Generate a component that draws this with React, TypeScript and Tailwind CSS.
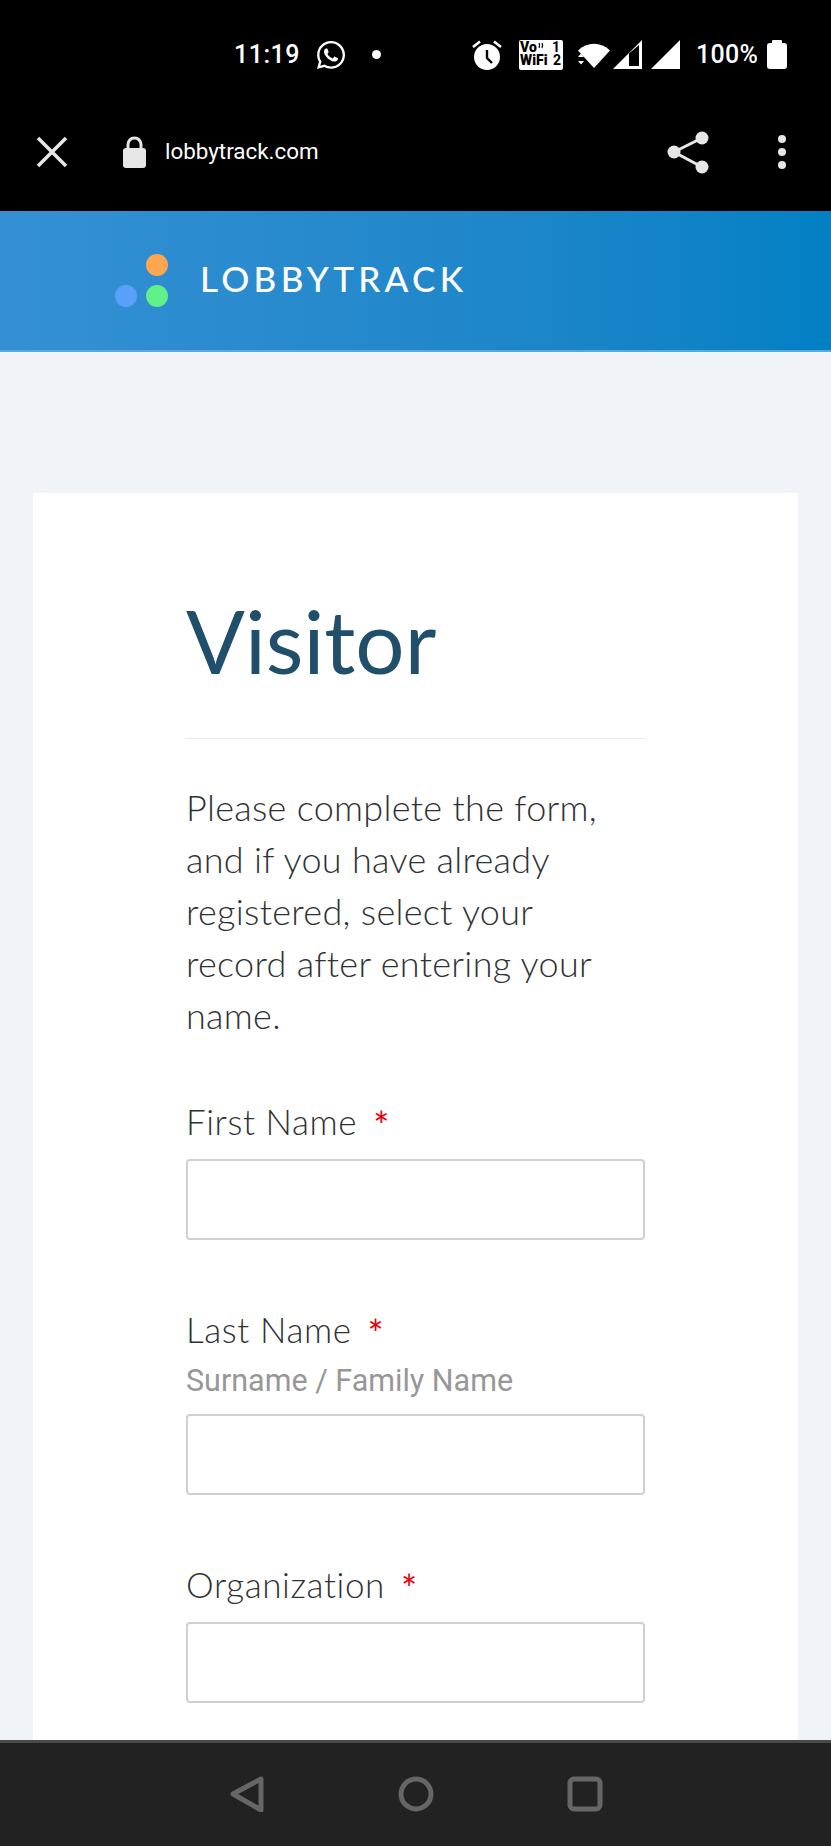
import React from 'react';
import { FaWhatsapp } from 'react-icons/fa';

const sans = 'font-["Lato",sans-serif]';
const roboto = 'font-["Roboto",sans-serif]';

function AlarmIcon() {
  return (
    <svg width="32" height="32" viewBox="0 0 32 32" fill="none">
      <circle cx="16" cy="18" r="13" fill="#fff" />
      <path d="M16 11v8l5 5" stroke="#000" strokeWidth="2.4" fill="none" />
      <path d="M2 8l7-5.500M30 8l-7-5.500" stroke="#fff" strokeWidth="2.600" />
    </svg>
  );
}

function VoWifiBadge() {
  return (
    <div className={`w-[44px] h-[30px] bg-white rounded-[2px] text-black ${roboto} font-black text-[14px] leading-[13px] px-[1px] pt-[1px] relative`}>
      <div className="flex justify-between">
        <span>Vo</span>
        <span className="font-bold pr-[2px]">1</span>
      </div>
      <div className="flex justify-between">
        <span>WiFi</span>
        <span className="font-bold pr-[1px]">2</span>
      </div>
      <svg className="absolute top-[2px] left-[19px]" width="8" height="7" viewBox="0 0 8 7" fill="none" stroke="#000" strokeWidth="1.300">
        <path d="M1 1c1 1.500 1 3 0 5M4 1c1 1.500 1 3 0 5" />
      </svg>
    </div>
  );
}

function WifiIcon() {
  return (
    <svg width="34" height="30" viewBox="0 0 34 30">
      <path d="M1 10.500C10 1.500 24 1.500 33 10.500L17 28z" fill="#fff" />
      <path d="M1 17l3-3.500 3 3.500zM1 21l3 3.500 3-3.500z" fill="#fff" />
    </svg>
  );
}

function SignalIcon({ hollow }: { hollow?: boolean }) {
  return (
    <svg width="30" height="30" viewBox="0 0 30 30">
      <path d="M0 29L29 0v29z" fill="#fff" />
      {hollow && <path d="M16 26V13.500L26 5v21z" fill="#000" />}
    </svg>
  );
}

function StatusBar() {
  return (
    <div className={`h-[100px] bg-black text-white flex items-center pl-[234px] pt-[9px] ${roboto}`}>
      <span className="text-[25px] font-medium tracking-[0.500px] w-[80px]">11:19</span>
      <FaWhatsapp className="text-[32px] ml-[1px]" />
      <span className="w-[9px] h-[9px] rounded-full bg-white ml-[25px]" />
      <div className="ml-[90px] flex items-center">
        <AlarmIcon />
      </div>
      <div className="ml-[16px]"><VoWifiBadge /></div>
      <div className="ml-[14px]"><WifiIcon /></div>
      <div className="ml-[2px]"><SignalIcon hollow /></div>
      <div className="ml-[8px]"><SignalIcon /></div>
      <span className="ml-[15px] text-[25px] font-medium tracking-[0.300px]">100%</span>
      <div className="ml-[9px] relative w-[20px] h-[26px] bg-white rounded-[3px] mt-[2px]">
        <div className="absolute -top-[3px] left-[5px] w-[10px] h-[4px] bg-white rounded-t-[1px]" />
      </div>
    </div>
  );
}

function UrlBar() {
  return (
    <div className={`h-[111px] bg-black flex items-center pl-[36px] pr-[45px] pb-[8px] text-[#e6e6e6] ${roboto}`}>
      <svg width="32" height="32" viewBox="0 0 32 32" stroke="#e6e6e6" strokeWidth="3.600">
        <path d="M2 2l28 28M30 2L2 30" />
      </svg>
      <svg className="ml-[54px]" width="25" height="32" viewBox="0 0 25 32">
        <path d="M6 13V8.500a6.500 6.500 0 0 1 13 0V13" fill="none" stroke="#e6e6e6" strokeWidth="3" />
        <rect x="1" y="12" width="23" height="20" rx="3" fill="#e6e6e6" />
      </svg>
      <span className="ml-[18px] text-[22.400px] text-white">lobbytrack.com</span>
      <svg className="ml-auto" width="42" height="44" viewBox="0 0 42 44" fill="#e6e6e6">
        <circle cx="35" cy="8" r="6.500" />
        <circle cx="7" cy="22" r="6.500" />
        <circle cx="35" cy="37" r="6.500" />
        <path d="M35 8L7 22l28 15" fill="none" stroke="#e6e6e6" strokeWidth="3" />
      </svg>
      <div className="ml-[69px] flex flex-col gap-[5px]">
        <span className="w-[8px] h-[8px] rounded-full bg-[#e6e6e6]" />
        <span className="w-[8px] h-[8px] rounded-full bg-[#e6e6e6]" />
        <span className="w-[8px] h-[8px] rounded-full bg-[#e6e6e6]" />
      </div>
    </div>
  );
}

function Header() {
  return (
    <header className="h-[141px] shrink-0 bg-gradient-to-r from-[#3490d3] to-[#0280c4] border-b-2 border-[#5aa9dc] flex items-center pl-[115px]">
      <div className="grid grid-cols-[22px_22px] gap-[9px]">
        <span />
        <span className="w-[22px] h-[22px] rounded-full bg-[#ffa750]" />
        <span className="w-[22px] h-[22px] rounded-full bg-[#59a0fb]" />
        <span className="w-[22px] h-[22px] rounded-full bg-[#5ff08a]" />
      </div>
      <span className={`ml-[32px] mb-[4px] text-white text-[35px] font-medium tracking-[4.300px] ${sans}`}>LOBBYTRACK</span>
    </header>
  );
}

function Field({ label, hint, className }: { label: string; hint?: string; className?: string }) {
  return (
    <div className={className}>
      <div className={`text-[35px] leading-[46px] font-light text-[#2f3234] tracking-[0.600px] ${sans}`}>
        {label}
        <span className="ml-[16px] text-[38px] font-normal leading-none align-[-5px] text-[#e8000b]">*</span>
      </div>
      {hint && <div className={`mt-[11px] text-[30.500px] leading-[36px] text-[#979797] ${roboto}`}>{hint}</div>}
      <input className="block w-full h-[81px] mt-[15px] bg-white border-2 border-[#d0d0d0] rounded-[4px]" />
    </div>
  );
}

export default function App() {
  return (
    <div className="w-[831px] h-[1846px] flex flex-col overflow-hidden bg-[#f0f3f8]">
      <StatusBar />
      <UrlBar />
      <Header />
      <main className="flex-1 min-h-0 overflow-hidden pt-[141px] px-[33px]">
        <div className="bg-white h-[1400px] px-[153px] pt-[98px]">
          <h1 className={`text-[87px] leading-[100px] text-[#204f6b] ${sans}`}>Visitor</h1>
          <div className="mt-[47px] h-px bg-[#e8e8e8]" />
          <p className={`mt-[42px] text-[36px] leading-[52px] font-light text-[#2f3234] tracking-[0.300px] whitespace-nowrap ${sans}`}>
            Please complete the form,<br />
            and if you have already<br />
            registered, select your<br />
            record after entering your<br />
            name.
          </p>
          <Field label="First Name" className="mt-[57px]" />
          <Field label="Last Name" className="mt-[66px]" hint="Surname / Family Name" />
          <Field label="Organization" className="mt-[66px]" />
        </div>
      </main>
      <nav className="h-[106px] shrink-0 bg-[#222222] border-t-[3px] border-[#4a4a4a] flex items-center justify-center gap-[133px] pb-[2px]">
        <svg width="36" height="36" viewBox="0 0 36 36" fill="none" stroke="#666" strokeWidth="5" strokeLinejoin="round">
          <path d="M4 18L32 3v31z" />
        </svg>
        <svg width="36" height="36" viewBox="0 0 36 36" fill="none" stroke="#666" strokeWidth="5">
          <circle cx="18" cy="18" r="15" />
        </svg>
        <svg width="36" height="36" viewBox="0 0 36 36" fill="none" stroke="#666" strokeWidth="5">
          <rect x="3" y="3" width="30" height="30" rx="4" />
        </svg>
      </nav>
    </div>
  );
}
